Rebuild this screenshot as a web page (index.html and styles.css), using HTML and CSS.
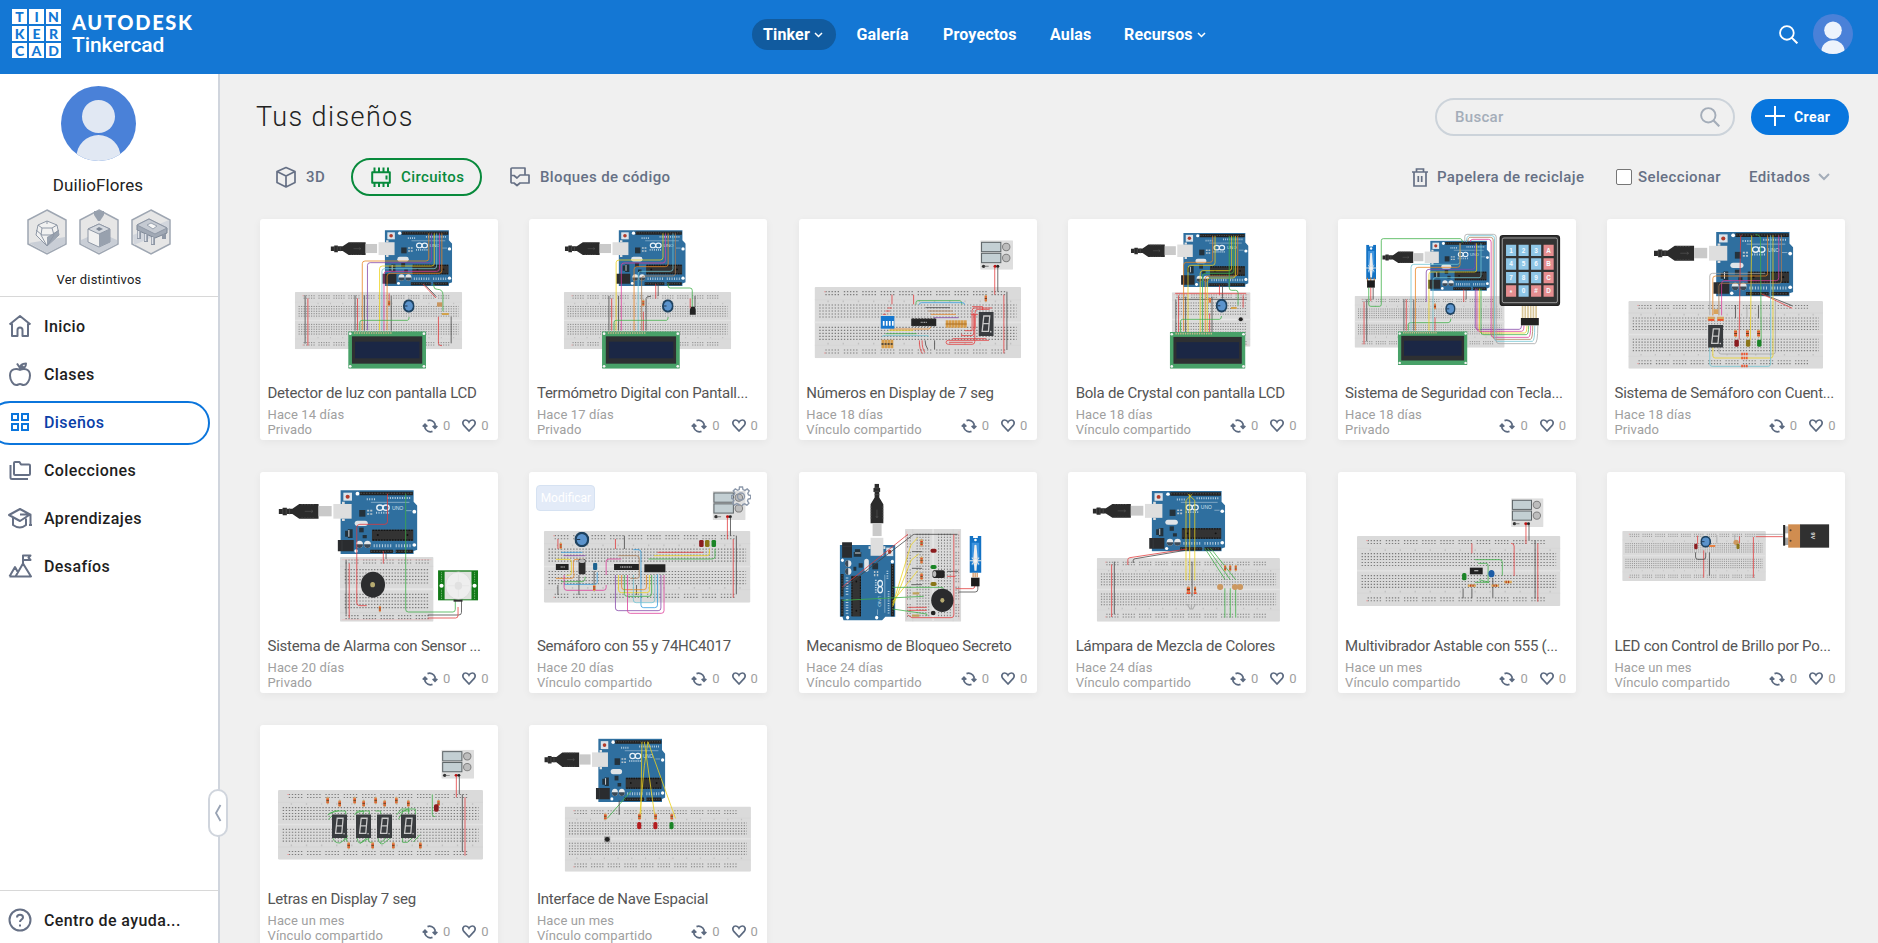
FILE: index.html
```html
<!DOCTYPE html>
<html lang="es">
<head>
<meta charset="utf-8">
<title>Tinkercad</title>
<link rel="stylesheet" href="styles.css">
</head>
<body>
<svg class="defs" width="0" height="0" aria-hidden="true">
<defs>
<symbol id="uno" viewBox="84 74 403 194" preserveAspectRatio="none">
<path d="M84 132h12v-4h12v3h16l20-14h56v44h-56l-20-14h-16v4h-12v-4h-12z" fill="#2b2b2b"/><path d="M96 130v18M106 130v18M116 130v18" stroke="#555" stroke-width="2"/><path d="M150 119h40M150 159h40" stroke="#555" stroke-width="2" stroke-dasharray="5 3"/><path d="M160 139h24l-5-4m5 4l-5 4" stroke="#555" stroke-width="2" fill="none"/>
<rect x="200" y="123" width="38" height="31" fill="#c9c9c9"/>
<path d="M264 76h212v34l11 12v132l-11 4v9H264z" fill="#2f6f9f"/><rect x="243" y="117" width="53" height="44" fill="#dedede"/><path d="M268 110h8v7h-8zM268 161h8v7h-8z" fill="#dedede"/>
<rect x="272" y="83" width="25" height="24" fill="#dbe3ea"/><circle cx="284.500" cy="95" r="6" fill="#b23c2c"/>
<path d="M320 80h88v11h-88zM408 80h66v11h-66z" fill="#222"/><path d="M322 85h150" stroke="#555" stroke-width="3" stroke-dasharray="4 4"/>
<g fill="#fff"><circle cx="313" cy="86" r="5.500"/><circle cx="478" cy="140" r="5.500"/><circle cx="478" cy="240" r="5.500"/><circle cx="309" cy="258" r="5"/></g>
<g fill="none" stroke="#e8f1f8" stroke-width="4"><ellipse cx="378" cy="128" rx="9" ry="8"/><ellipse cx="396" cy="128" rx="9" ry="8"/></g>
<path d="M340 103h28M400 99h70M367 143h38" stroke="#bcd2e2" stroke-width="6" stroke-dasharray="3 4"/><text class="model" x="413" y="134">UNO</text><path d="M352 112h112M454 137h16" stroke="#a9c6da" stroke-width="2"/>
<rect x="318" y="135" width="18" height="20" fill="#24323c"/><path d="M341 137h18M341 147h18" stroke="#b7c4cc" stroke-width="5" stroke-dasharray="6 3"/>
<rect x="305" y="167" width="38" height="16" rx="8" fill="#dfe4e8"/><rect x="318" y="188" width="13" height="14" fill="#24323c"/><path d="M277 197h8v-4h14v26h-14v-4h-8z" fill="#22313b"/><path d="M288 195v20" stroke="#d0d6da" stroke-width="3"/><path d="M328 210h12v10h-12" fill="#22313b"/>
<rect x="355" y="194" width="120" height="33" fill="#333"/><path d="M357 196h116M357 225h116" stroke="#151515" stroke-width="4" stroke-dasharray="5 3"/><circle cx="372" cy="210" r="3" fill="#111"/><circle cx="458" cy="210" r="3" fill="#111"/>
<path d="M256 225h46v34h-46z" fill="#2a2c2f"/><path d="M268 226v32" stroke="#3d4043" stroke-width="2"/>
<g><ellipse cx="319" cy="238" rx="10" ry="11" fill="#e5e8ea"/><ellipse cx="342" cy="238" rx="10" ry="11" fill="#e5e8ea"/><path d="M309 238h20a10 11 0 0 1-20 0zM332 238h20a10 11 0 0 1-20 0z" fill="#3a4a58"/></g>
<path d="M360 242h56M424 242h48" stroke="#b9d0e0" stroke-width="9" stroke-dasharray="3 5"/><path d="M350 254h66v10h-66zM424 254h50v10h-50z" fill="#222"/><path d="M352 259h120" stroke="#555" stroke-width="3" stroke-dasharray="4 4"/>
</symbol>
<symbol id="board" viewBox="0 0 611 214" preserveAspectRatio="none">
<rect width="611" height="214" rx="4" fill="#dadada"/><path d="M0 38h611M0 175h611" stroke="#cfcfcf" stroke-width="1"/><path d="M0 106h611" stroke="#e3e3e3" stroke-width="5"/>
<g stroke="#7c7c7c" stroke-width="3.400"><g stroke-dasharray="4 5.100 4 5.100 4 5.100 4 5.100 4 14.200"><path d="M32 14h542M32 23h542M32 189h542M32 198h542"/></g><g stroke-dasharray="4 5.100"><path d="M14 54h584M14 63h584M14 72h584M14 81h584M14 90h584M14 121h584M14 130h584M14 139h584M14 148h584M14 157h584"/></g></g>
<g stroke="#c0c0c0" stroke-width="5" stroke-dasharray="4 41"><path d="M38 43h548M38 170h548"/></g><path d="M28 14h5M28 198h5" stroke="#e8a0a0" stroke-width="3"/>
</symbol>
<symbol id="halfboard" viewBox="0 0 272 194" preserveAspectRatio="none">
<rect width="272" height="194" rx="3" fill="#dadada"/><path d="M0 97h272" stroke="#e6e6e6" stroke-width="6"/><path d="M0 28h272M0 167h272" stroke="#c9c9c9"/>
<g stroke="#7c7c7c" stroke-width="3.400"><g stroke-dasharray="4 4.500 4 4.500 4 4.500 4 4.500 4 13"><path d="M16 9h242M16 18h242M16 176h242M16 185h242"/></g><g stroke-dasharray="4 4.500"><path d="M14 38h246M14 48h246M14 58h246M14 68h246M14 78h246M14 112h246M14 122h246M14 132h246M14 142h246M14 152h246"/></g></g>
<path d="M6 8h260M6 188h260" stroke="#e9b3b3" stroke-width="1.500"/>
</symbol>
<symbol id="lcd" viewBox="0 0 226 112" preserveAspectRatio="none"><rect width="226" height="112" rx="2" fill="#48a168"/><rect x="11" y="15" width="204" height="82" fill="#2e3032"/><rect x="20" y="31" width="187" height="50" fill="#1b2745"/><path d="M17 5h112" stroke="#c9b98d" stroke-width="5" stroke-dasharray="4 3"/><g fill="#f4f4f4"><circle cx="6" cy="7" r="4"/><circle cx="220" cy="7" r="4"/><circle cx="6" cy="105" r="4"/><circle cx="220" cy="105" r="4"/></g></symbol>
<symbol id="pot" viewBox="0 0 36 40" preserveAspectRatio="none"><ellipse cx="18" cy="20" rx="18" ry="20" fill="#1e4260"/><ellipse cx="18" cy="20" rx="12.500" ry="14" fill="#5b93cc"/><path d="M5 20h9" stroke="#1e3550" stroke-width="3"/></symbol>
<symbol id="psu" viewBox="0 0 97 88" preserveAspectRatio="none"><rect width="97" height="88" rx="2" fill="#dedede"/><rect x="4" y="6" width="57" height="28" fill="#c3cfd3" stroke="#5d6467" stroke-width="3"/><rect x="4" y="39" width="57" height="28" fill="#c3cfd3" stroke="#5d6467" stroke-width="3"/><circle cx="77" cy="20" r="11" fill="#bdbdbd" stroke="#808080" stroke-width="3"/><circle cx="77" cy="53" r="11" fill="#bdbdbd" stroke="#808080" stroke-width="3"/><circle cx="10" cy="78" r="5" fill="#333"/><path d="M13 78h12" stroke="#777" stroke-width="3"/><circle cx="44" cy="78" r="4.500" fill="#b11"/><circle cx="52" cy="78" r="4.500" fill="#222"/></symbol>
<symbol id="seg" viewBox="0 0 46 72" preserveAspectRatio="none"><rect width="46" height="72" fill="#393c3f"/><path d="M16 12h18l-4 46H11zM13 35h19" fill="none" stroke="#c9c9c9" stroke-width="4"/><circle cx="37" cy="59" r="2.500" fill="#c9c9c9"/></symbol>
<symbol id="res" viewBox="0 0 10 26" preserveAspectRatio="none"><path d="M5 0v26" stroke="#999" stroke-width="2"/><rect x="1" y="3" width="8" height="20" rx="2" fill="#d8a35c"/><path d="M1 9h8M1 18h8" stroke="#e03a22" stroke-width="3"/><path d="M1 13.500h8" stroke="#6b3c1a" stroke-width="3"/></symbol>
<symbol id="servo" viewBox="0 0 40 112" preserveAspectRatio="none"><path d="M3 0h10v6h14V0h10v110H3z" fill="#1372c4"/><path d="M9 20h22v68H9z" fill="#3d93de"/><path d="M17 28q3-4 6 0l3 36-3 40h-6l-3-40z" fill="#eee"/><path d="M0 74h40M9 65l22 20M31 65L9 85" stroke="#dfe4e8" stroke-width="3"/><circle cx="20" cy="75" r="7" fill="#f4f4f4" stroke="#bbb"/><circle cx="20" cy="12" r="4" fill="#fff"/></symbol>
<symbol id="recycle" viewBox="0 0 16 16"><path d="M5.500 2.600A5.800 5.800 0 0 1 13 6v4M10.500 13.400A5.800 5.800 0 0 1 3 10V6.500M.8 8.700L3 6.300l2.300 2.400M10.700 7.800L13 10.200l2.300-2.400" fill="none" stroke="currentColor" stroke-width="1.800"/></symbol>
<symbol id="heart" viewBox="0 0 14 13"><path d="M7 12L2 6.700C-.3 4 1.200 1 3.700 1 5.500 1 6.500 2.200 7 3.200 7.500 2.200 8.500 1 10.300 1c2.500 0 4 3 1.700 5.700z" fill="none" stroke="currentColor" stroke-width="1.700"/></symbol>
<symbol id="person" viewBox="0 0 75 75"><clipPath id="pc"><circle cx="37.500" cy="37.500" r="37.500"/></clipPath><g clip-path="url(#pc)"><rect width="75" height="75" fill="#4a81d8"/><g fill="currentColor"><circle cx="37.500" cy="30.500" r="16.500"/><circle cx="37.500" cy="71" r="22"/></g></g></symbol>
<symbol id="lens" viewBox="0 0 20 20"><circle cx="8.300" cy="8.300" r="7.200" fill="none" stroke="currentColor" stroke-width="1.900"/><path d="M13.300 13.300l6 6" stroke="currentColor" stroke-width="2.200"/></symbol>
</defs>
</svg>

<header class="topbar">
<a class="brand">
<span class="tiles"><b>T</b><b>I</b><b>N</b><b>K</b><b>E</b><b>R</b><b>C</b><b>A</b><b>D</b></span>
<span class="brand-text"><span class="brand-top">AUTODESK</span><span class="brand-sub">Tinkercad</span></span>
</a>
<nav class="nav">
<a class="nav-link active">Tinker<svg class="chev" viewBox="0 0 9 6"><path d="M1 1l3.500 3.500L8 1"/></svg></a><a class="nav-link n2">Galería</a><a class="nav-link n3">Proyectos</a><a class="nav-link n4">Aulas</a><a class="nav-link n5">Recursos<svg class="chev" viewBox="0 0 9 6"><path d="M1 1l3.500 3.500L8 1"/></svg></a>
</nav>
<div class="account"><svg class="lens-top"><use href="#lens"/></svg><svg class="face-top"><use href="#person"/></svg></div>
</header>

<div class="shell">
<aside class="side">
<div class="profile">
<svg class="face"><use href="#person"/></svg>
<div class="user">DuilioFlores</div>
<div class="badges">
<svg viewBox="0 0 40 46"><path class="hex" d="M20 1l19 10v24L20 45 1 35V11z"/><path d="M2 34l36-6v7L20 44z" fill="#c9ced6"/><path d="M11 16l9-4 10 4 2 10-12 11L9 26z" fill="#f1f1f1" stroke="#8f98a6"/><path d="M20 28l12-7v5L20 37z" fill="#9aa3b0"/><path d="M9 21l6 5h10l7-5M15 19l-4-3M25 19l5-3M15 19h10l2 7-7 11-6-11zM20 12v3" fill="none" stroke="#8f98a6"/></svg>
<svg viewBox="0 0 40 46"><path class="hex" d="M20 1l19 10v24L20 45 1 35V11z"/><path d="M2 31l18-8 18 8v4L20 44 2 35z" fill="#c9ced6"/><path d="M15 2h10v4l-4 6h-2l-4-6z" fill="#98a1ae"/><path d="M9 20l11-5 11 5v13l-11 5-11-5z" fill="#f1f1f1" stroke="#8f98a6"/><path d="M20 25l11-5v13l-11 5z" fill="#98a1ae"/><path d="M9 20l11 5 11-5-11-5z" fill="#d5d9df" stroke="#8f98a6"/><path d="M17 20l3-2 4 2-4 2z" fill="#7d8796"/></svg>
<svg viewBox="0 0 40 46"><path class="hex" d="M20 1l19 10v24L20 45 1 35V11z"/><path d="M2 26L38 11v10L3 36z" fill="#d2d6dd"/><path d="M6 16l12-6 18 9v5l-12 5-18-8z" fill="#a1a9b5" stroke="#7d8796"/><path d="M6 16l12-6 18 9-12 6z" fill="#c5cad2" stroke="#8f98a6"/><path d="M16 16l4-2 6 3-4 3z" fill="#f6f6f6" stroke="#9aa3b0"/><path d="M8 22v8M15 25v8M22 28v8M33 25v5" stroke="#8f98a6" stroke-width="4"/><path d="M7.500 22v7M14.500 25v7M21.500 28v7" stroke="#e1e4e9" stroke-width="1.500"/></svg>
</div>
<div class="see">Ver distintivos</div>
</div>
<nav class="menu">
<a><svg viewBox="0 0 24 24"><path d="M1.500 10.500L12 2l10.500 8.500M4 9.500V22h5.500v-6a2.500 2.500 0 0 1 5 0v6H20V9.500"/></svg>Inicio</a>
<a><svg viewBox="0 0 24 24"><path d="M12 8C8.500 6 2 6.500 2 13.500 2 18 5 23 8.500 23c1.500 0 2-1 3.500-1s2 1 3.500 1C19 23 22 18 22 13.500 22 6.500 15.500 6 12 8zM12 8V6L9 1.500M12 6.500c0-4 2.500-5 6-5 0 3.500-2 5.500-6 5M12 6.500l3.500-2.500"/></svg>Clases</a>
<a class="on"><svg viewBox="0 0 24 24"><path d="M4 4h6v6H4zM14 4h6v6h-6zM4 14h6v6H4zM14 14h6v6h-6z"/></svg>Diseños</a>
<a><svg viewBox="0 0 24 24"><path d="M6 16V5q0-1 1-1h4.500l1.500 2.500h8q1 0 1 1V16q0 1-1 1H7q-1 0-1-1zM2.500 7v12.500q0 1.500 1.500 1.500h16"/></svg>Colecciones</a>
<a><svg viewBox="0 0 24 24"><path d="M1 9l11-6 10 5.500L12 15zM5 12v7q7 5 13 0v-6.500M12 8.500h10.500V18M21 19h3"/></svg>Aprendizajes</a>
<a><svg viewBox="0 0 24 24"><path d="M1.500 22.500L7 13l3 5.500M7.500 22.500L15 9.500l8 13H1.500M15 9.500V1.500h7.500l-2 2.200 2 2.300H15"/></svg>Desafíos</a>
</nav>
<div class="help"><svg viewBox="0 0 24 24"><circle cx="12" cy="12" r="10.500"/><path d="M9 9.500C9 5.800 15 5.800 15 9.500c0 2-3 2.200-3 4.500M12 16.500v2"/></svg>Centro de ayuda...</div>
<button class="handle"><svg viewBox="0 0 8 18"><path d="M6.500 1L2 9l4.500 8"/></svg></button>
</aside>

<main class="main">
<div class="row head"><h1>Tus diseños</h1>
<div class="search"><span>Buscar</span><svg><use href="#lens"/></svg></div>
<button class="create"><svg viewBox="0 0 20 20"><path d="M10 0v20M0 10h20"/></svg>Crear</button></div>
<div class="row tools">
<a class="tab t3d"><svg viewBox="0 0 20 22"><path d="M10 1.500l9 4v11l-9 4.500-9-4.500v-11zM1 5.500l9 4.500 9-4.500M10 10v11"/></svg>3D</a>
<a class="tab sel"><svg viewBox="0 0 20 22"><path d="M1.200 6.200h17.600v10.500H1.200zM3.500 1.500v4M8 1.500v4M12.500 1.500v4M17 1.500v4M3.500 17v4M8 17v4M12.500 17v4M17 17v4M15.500 9.500v4"/></svg>Circuitos</a>
<a class="tab blocks"><svg viewBox="0 0 20 22"><path d="M1 10V3q0-1 1-1h13v7h4v8h-9l-3 2.500L4 17H2q-1 0-1-1V9.500h3L7 12l3-3h5"/></svg>Bloques de código</a>
<a class="tool bin"><svg viewBox="0 0 16 19"><path d="M0 4h16M2 4v14h12V4M4.500 4V1h7v3M6.300 8v6M9.700 8v6"/></svg>Papelera de reciclaje</a>
<label class="tool pick"><i></i>Seleccionar</label>
<a class="tool sort">Editados<svg viewBox="0 0 12 8"><path d="M1 1l5 5 5-5"/></svg></a>
</div>

<section class="grid">
<article class="card"><svg class="thumb" viewBox="30 27 691 480" preserveAspectRatio="none">
<use href="#board" x="131" y="246" width="486" height="172"/><use href="#uno" x="235" y="59" width="353" height="170"/>
<g class="w"><path class="k" d="M161 256v145M306 256v106M411 256v106M585 320v80M333 256v106M507 222l35 38"/><path class="r" d="M169 265v142M313 265v97M548 320v80q0 7 10 7M503 222l38 42M405 250v38"/><path class="o" d="M520 70v75q0 8-8 8H335q-8 0-8 8v200M558 70v112q0 8-8 8H408q-9 0-9 8v163"/><path class="p" d="M528 70v80q0 8-8 8H350q-8 0-8 8v195"/><path class="y" d="M536 70v90q0 8-8 8H386q-9 0-9 8v185"/><path class="c" d="M543 70v98q0 8-8 8H392q-8 0-8 8v177"/><path class="m" d="M551 70v106q0 8-8 8H398q-8 0-8 8v170"/><path class="g" d="M320 362v-25q0-6 6-6h132q5 0 5-10M535 222v8q0 8 10 8 16 0 16 16v50"/></g>
<use href="#pot" x="445" y="268" width="34" height="40"/><use href="#res" x="401" y="268" width="8" height="22"/><rect x="544" y="277" width="15" height="13" fill="#c9955f"/><path d="M558 312h20" stroke="#d2a24c" stroke-width="6"/>
<use href="#lcd" x="286" y="364" width="226" height="112"/></svg>
<h2>Detector de luz con pantalla LCD</h2><div class="meta"><p>Hace 14 días<br>Privado</p><span><svg class="rc"><use href="#recycle"/></svg>0</span><span><svg class="ht"><use href="#heart"/></svg>0</span></div></article>

<article class="card"><svg class="thumb" viewBox="811 27 691 480" preserveAspectRatio="none">
<use href="#board" x="912" y="246" width="486" height="172"/><use href="#uno" x="915" y="59" width="351" height="170"/>
<g class="w"><path class="k" d="M1043 258v104M1071 258v104M1151 362V265q0-6 14-6M1186 222v36M1293 258v35"/><path class="r" d="M1051 265v97M1143 305v57M1179 222v44M1279 265v30"/><path class="y" d="M1200 70v72q0 8-8 8h-119q-9 0-9 8v204"/><path class="m" d="M1207 70v81q0 8-8 8h-112q-8 0-8 8v195"/><path class="o" d="M1215 70v92q0 8-8 8h-83q-8 0-8 8v184"/><path class="c" d="M1229 70v106q0 8-8 8h-86q-7 0-7 8v170"/><path class="b" d="M1236 70v120q0 8-8 8h-82q-8 0-8 8v156"/><path class="g" d="M1058 362v-25q0-6 6-6h146q5 0 5-10M1215 220v8q0 6 6 6h57q7 0 7 7v50"/></g>
<use href="#pot" x="1197" y="268" width="34" height="40"/><use href="#res" x="1139" y="266" width="8" height="26"/><path d="M1278 314v-15l4-9h10l3 9v15z" fill="#222"/>
<use href="#lcd" x="1023" y="364" width="226" height="112"/></svg>
<h2>Termómetro Digital con Pantall...</h2><div class="meta"><p>Hace 17 días<br>Privado</p><span><svg class="rc"><use href="#recycle"/></svg>0</span><span><svg class="ht"><use href="#heart"/></svg>0</span></div></article>

<article class="card"><svg class="thumb" viewBox="26 27 704 480" preserveAspectRatio="none">
<use href="#board" x="72" y="231" width="611" height="214"/><use href="#psu" x="562" y="91" width="97" height="88"/>
<g class="w"><path class="r" d="M605 170v84M632 254v176M301 254v29M365 254v29M288 294h13M282 303h13M274 313h10M382 391q0 30 10 40M390 391q0 25 8 36"/><path class="k" d="M614 170v75M641 245v175M399 391q0 15 8 27M427 391v28"/><path class="g" d="M372 284v-6q0-6 6-6h124q6 0 6 12M282 371h92"/><path class="bl" d="M382 284q0-6 6-6h121q7 0 7 6"/><path class="k" d="M400 293h73"/><path class="b" d="M408 303h73"/><path class="o" d="M416 313h74M294 357h115q6 0 6-6"/><path class="p" d="M424 323h74"/><path class="y" d="M291 361h73"/><path class="c" d="M274 381v-4h134v4"/><path class="r" d="M597 294h-51q-8 0-8 8v60h-22M590 298h-35q-8 0-8 8v50M569 300v-10h-31M555 314h-20M507 371v6h28q8 0 8-8v-60M588 391h-120q-7 0-7 6 0 6 7 6h70q8 0 8-8v-80M480 386h100M470 397h70"/></g>
<rect x="268" y="318" width="40" height="38" fill="#1577cf"/><path d="M274 340h32" stroke="#fff" stroke-width="14" stroke-dasharray="5 4"/><rect x="358" y="326" width="74" height="22" fill="#252525"/><path d="M361 326h70M361 348h70" stroke="#444" stroke-width="3" stroke-dasharray="5 4"/><path d="M386 337h20" stroke="#aaa" stroke-width="4" stroke-dasharray="3 2"/>
<path d="M460 342h62" stroke="#d79d4a" stroke-width="22" stroke-dasharray="8 1"/><path d="M460 342h62" stroke="#a86a20" stroke-width="3"/><path d="M270 402h36" stroke="#d79d4a" stroke-width="26" stroke-dasharray="8 1"/><path d="M270 402h36" stroke="#333" stroke-width="4" stroke-dasharray="6 3"/><use href="#res" x="574" y="252" width="9" height="26"/>
<use href="#seg" x="557" y="306" width="45" height="72"/></svg>
<h2>Números en Display de 7 seg</h2><div class="meta"><p>Hace 18 días<br>Vínculo compartido</p><span><svg class="rc"><use href="#recycle"/></svg>0</span><span><svg class="ht"><use href="#heart"/></svg>0</span></div></article>

<article class="card"><svg class="thumb" viewBox="823 27 704 480" preserveAspectRatio="none">
<use href="#halfboard" x="1130" y="247" width="233" height="163"/><use href="#uno" x="1009" y="67" width="348" height="165"/>
<g class="w"><path class="k" d="M1142 268v98M1171 260v106M1249 260v106M1280 226v40M1148 268h204"/><path class="r" d="M1140 250h210M1150 256v110M1271 226v30M1341 256v37M1242 310v56"/><path class="o" d="M1251 78v71q0 8-8 8h-70q-8 0-8 8v198M1325 78v112q0 8-8 8h-80q-8 0-8 8v160"/><path class="y" d="M1258 78v80q0 8-8 8h-64q-8 0-8 8v192M1307 78v96q0 8-8 8h-77q-8 0-8 8v176M1318 78v118q0 8-8 8h-68q-7 0-7 8v154"/><path class="g" d="M1156 366v-32q0-6 6-6h109q6 0 6-10M1300 78v156q0 7 7 7h12q7 0 7 7v38M1313 78v104q0 8-8 8h-76q-8 0-8 8v168"/></g>
<use href="#pot" x="1260" y="266" width="35" height="42"/><path d="M1305 294h17" stroke="#d2a24c" stroke-width="6"/><rect x="1239" y="264" width="7" height="14" fill="#e67a40"/><path d="M1325 322h18v13h-18z" fill="#ccc"/><circle cx="1334" cy="328" r="6" fill="#222"/>
<use href="#lcd" x="1124" y="366" width="224" height="110"/></svg>
<h2>Bola de Crystal con pantalla LCD</h2><div class="meta"><p>Hace 18 días<br>Vínculo compartido</p><span><svg class="rc"><use href="#recycle"/></svg>0</span><span><svg class="ht"><use href="#heart"/></svg>0</span></div></article>

<article class="card"><svg class="thumb" viewBox="22 27 704 480" preserveAspectRatio="none">
<use href="#board" x="71" y="258" width="444" height="155"/><use href="#uno" x="153" y="91" width="318" height="152"/><use href="#servo" x="103" y="104" width="34" height="106"/>
<path d="M109 203v12M119 203v12M129 203v12" stroke="#c77a38" stroke-width="3"/><rect x="108" y="211" width="23" height="22" fill="#1c1c1c"/>
<g class="w"><path class="g" d="M113 233v50q0 6 6 6h26q5 0 5-6V92q0-6 6-6h228q6 0 6 12M230 362v-18q0-6 6-6h112q8 0 8-12"/><path class="r" d="M119 233v40M99 275v128M224 268v94M309 322v40M394 238v38"/><path class="k" d="M126 233v36M217 268v94M246 268v94M107 268v126M401 238v30"/><path class="c" d="M383 100v54q0 9-8 9H246q-8 0-8 9v190M445 100v98q0 5-6 5H310q-7 0-7 8v150"/><path class="o" d="M383 100v64q0 8-8 8H258q-7 0-7 8v182"/><path class="p" d="M428 100v66q0 12-9 12H291q-8 0-8 8v90M428 236v114q0 8 8 8h122q7 0 7-12"/><path class="y" d="M432 100v80q0 6-6 6H297q-6 0-6 8v168M440 236v125q0 8 8 8h126q7 0 7-22"/><path class="g" d="M445 236v130q0 8 8 8h126q7 0 7-27"/><path class="m" d="M413 96q0-8 8-8h46q8 0 8 8v278q0 8 8 8h102q7 0 7-35M433 236v120q0 8 8 8h124q7 0 7-17"/><path class="b" d="M406 96q0-14 7-14h60q8 0 8 8v290q0 8 8 8h102q7 0 7-41"/><path class="c" d="M402 96q0-19 9-19h66q8 0 8 8v300q0 9 8 9h104q7 0 7-47"/><path class="gr" d="M397 96V80q0-7 7-7h78q8 0 8 8v311q0 9 8 9h106q9 0 9-54"/></g>
<path d="M568 286v40M576 286v40M584 286v40M592 286v40M600 286v40M608 286v40" stroke="#d9c79a" stroke-width="5"/><rect x="563" y="324" width="53" height="22" fill="#222"/>
<rect x="502" y="77" width="175" height="209" rx="8" fill="#333" stroke="#222" stroke-width="4"/><rect x="508" y="84" width="163" height="194" rx="5" fill="none" stroke="#ccc" stroke-width="2"/>
<g fill="#8fc6e6"><path d="M519 104h30v34h-30zM556 104h30v34h-30zM593 104h30v34h-30zM519 145h30v34h-30zM556 145h30v34h-30zM593 145h30v34h-30zM519 186h30v34h-30zM556 186h30v34h-30zM593 186h30v34h-30zM556 226h30v34h-30z"/></g><path fill="#e58e90" d="M630 104h30v34h-30zM630 145h30v34h-30zM630 186h30v34h-30zM630 226h30v34h-30zM519 226h30v34h-30zM593 226h30v34h-30z"/>
<g class="keys"><text x="534" y="128">1</text><text x="571" y="128">2</text><text x="608" y="128">3</text><text x="645" y="128">A</text><text x="534" y="169">4</text><text x="571" y="169">5</text><text x="608" y="169">6</text><text x="645" y="169">B</text><text x="534" y="210">7</text><text x="571" y="210">8</text><text x="608" y="210">9</text><text x="645" y="210">C</text><text x="534" y="255">*</text><text x="571" y="250">0</text><text x="608" y="250">#</text><text x="645" y="250">D</text></g>
<use href="#pot" x="339" y="278" width="31" height="37"/><use href="#res" x="305" y="278" width="8" height="22"/><use href="#lcd" x="199" y="364" width="206" height="101"/></svg>
<h2>Sistema de Seguridad con Tecla...</h2><div class="meta"><p>Hace 18 días<br>Privado</p><span><svg class="rc"><use href="#recycle"/></svg>0</span><span><svg class="ht"><use href="#heart"/></svg>0</span></div></article>

<article class="card"><svg class="thumb" viewBox="819 27 704 480" preserveAspectRatio="none">
<use href="#board" x="882" y="273" width="576" height="203"/><use href="#uno" x="958" y="64" width="412" height="196"/>
<g class="w"><path class="k" d="M1199 285v40M1267 285v40M1275 250l94 38"/><path class="gr" d="M1233 285v40M1150 412v14q0 6 6 6h155q6 0 6-7V268M1123 316V198q0-8 8-8h156"/><path class="r" d="M1273 250l94 45M1218 74q-4 2-4 10l-4 305"/><path class="o" d="M1132 316V206q0-8 8-8h148q6 0 6-8V76"/><path class="m" d="M1158 316v-95q0-9 8-9h154q7 0 7-9V76"/><path class="b" d="M1150 316v-88q0-8 8-8h170q7 0 7-9V76"/><path class="y" d="M1247 76l-4 315M1132 412v25q0 7 7 7h164q7 0 7-8V76"/><path class="g" d="M1258 74q16 0 15 14l2 303"/><path class="c" d="M1123 412v50q0 7 7 7h166q7 0 7-8V76"/></g>
<path d="M1117 320h20v12h-20zM1145 320h20v12h-20zM1134 298h14v14h-14z" fill="#d8a35c"/><path d="M1119 330h17M1146 330h17" stroke="#f33b20" stroke-width="5"/><use href="#res" x="1194" y="356" width="11" height="28"/><use href="#res" x="1229" y="356" width="11" height="28"/><use href="#res" x="1262" y="356" width="11" height="28"/>
<rect x="1196" y="389" width="13" height="21" rx="4" fill="#8b1c1f"/><rect x="1230" y="389" width="13" height="21" rx="4" fill="#8a7517"/><rect x="1263" y="389" width="13" height="21" rx="4" fill="#1b8427"/><path d="M1216 432h20M1216 444h20M1216 468h20" stroke="#ee5732" stroke-width="7" stroke-dasharray="5 2"/>
<use href="#seg" x="1118" y="345" width="45" height="68"/></svg>
<h2>Sistema de Semáforo con Cuent...</h2><div class="meta"><p>Hace 18 días<br>Privado</p><span><svg class="rc"><use href="#recycle"/></svg>0</span><span><svg class="ht"><use href="#heart"/></svg>0</span></div></article>

<article class="card"><svg class="thumb" viewBox="30 21 691 480" preserveAspectRatio="none">
<use href="#halfboard" x="262" y="276" width="272" height="194"/><use href="#uno" x="84" y="74" width="403" height="194"/>
<g class="w"><path class="k" d="M280 286v163M396 262v20M517 450h90q8 0 8-8v-35"/><path class="r" d="M289 295v164M388 258v38M400 86v84q0 8-8 8h-72q-9 0-9 9v227q0 8 9 8h20M517 459h81q7 0 7-8v-25"/><path class="g" d="M453 86v347q0 8 8 8h129q7 0 7-8v-26"/></g>
<ellipse cx="358" cy="359" rx="35" ry="39" fill="#2c2d2f"/><ellipse cx="357" cy="359" rx="7" ry="8" fill="#b7ab71"/><use href="#res" x="374" y="420" width="8" height="23"/>
<rect x="547" y="316" width="116" height="90" fill="#137a18"/><rect x="566" y="320" width="78" height="83" fill="#dfe3de"/><ellipse cx="606" cy="362" rx="37" ry="41" fill="#eee" stroke="#d5d5d5" stroke-width="2"/><ellipse cx="606" cy="362" rx="11" ry="12" fill="#e1e1e1"/><path d="M606 350v-22M606 374v22M595 362h-20M617 362h20" stroke="#e4e4e4" stroke-width="2"/><circle cx="557" cy="362" r="6" fill="#fff"/><circle cx="653" cy="362" r="6" fill="#fff"/><path d="M557 322v28M557 374v28M653 322v28M653 374v28" stroke="#6cb36e" stroke-width="3" stroke-dasharray="3 2"/><rect x="592" y="404" width="26" height="6" fill="#333"/></svg>
<h2>Sistema de Alarma con Sensor ...</h2><div class="meta"><p>Hace 20 días<br>Privado</p><span><svg class="rc"><use href="#recycle"/></svg>0</span><span><svg class="ht"><use href="#heart"/></svg>0</span></div></article>

<article class="card"><svg class="thumb" viewBox="811 21 691 480" preserveAspectRatio="none">
<use href="#board" x="854" y="198" width="600" height="215"/><use href="#psu" x="1344" y="78" width="96" height="87"/>
<g class="w"><path class="r" d="M1387 157v66M1404 222v176M895 222v30M1062 222v30M1184 262h133"/><path class="k" d="M1396 157v55M1413 212v176M1088 212v40M956 330v60M895 360v30M1000 318v40M1123 360v30"/><path class="bl" d="M904 262h62M913 358h90q6 0 6-6v-30M1114 254h14q8 0 8 8v158q0 8 8 8h32q8 0 8-8v-92"/><path class="p" d="M911 272h64M1062 330v99q0 8 8 8h116q8 0 8-8v-99"/><path class="y" d="M889 283h38q7 0 7 7v33q0 8-8 8h-6M1174 272h153q8 0 8-8v-12M1071 330v45q0 8 8 8h74q8 0 8-8v-45"/><path class="o" d="M940 325v-36q0-6 8-6h24M889 340h46q7 0 7-15M1080 330v36q0 8 8 8h56q8 0 8-8v-36"/><path class="g" d="M904 350h62q8 0 8-15M1158 282h185q8 0 8-8v-22M1088 330v56q0 8 8 8h63q8 0 8-8v-56"/><path class="m" d="M913 330v38q0 8 8 8h106q8 0 8-8v-8M1035 330v-40q0-8 8-8h36M1097 330v107q0 8 8 8h90q8 0 8-8V330"/><path class="c" d="M1114 330v75q0 8 8 8h46q8 0 8-8v-75"/><path class="b" d="M1070 272h53q8 0 8 8v54q0 6-8 6h-18"/></g>
<use href="#pot" x="943" y="200" width="43" height="47"/><path d="M889 297h37v18h-37zM1058 297h72v18h-72zM1146 298h61v24h-61z" fill="#232323"/><path d="M903 306h12M1076 306h34" stroke="#aaa" stroke-width="4" stroke-dasharray="3 2"/><rect x="955" y="282" width="20" height="46" rx="4" fill="#2e2e2e"/><ellipse cx="965" cy="288" rx="9" ry="6" fill="#bbb"/><rect x="997" y="294" width="12" height="21" rx="3" fill="#1e6390"/><use href="#res" x="899" y="230" width="8" height="25"/><use href="#res" x="996" y="356" width="9" height="25"/>
<rect x="1305" y="225" width="13" height="21" rx="4" fill="#8b1c1f"/><rect x="1322" y="225" width="13" height="21" rx="4" fill="#8a7517"/><rect x="1341" y="225" width="13" height="21" rx="4" fill="#1b8427"/></svg>
<span class="edit">Modificar</span><svg class="gear" viewBox="0 0 20 20"><path d="M8.500 1h3l.5 2.600 2 .8 2.200-1.500 2 2-1.400 2.300.7 1.800 2.200.5v3l-2.500.5-.8 2 1.500 2.200-2 2-2.300-1.400-1.800.7-.6 2.500h-3l-.5-2.700-2-.8-2.200 1.500-2-2L3 14.700 2.300 13 .5 12.500v-3L3 9l.8-2L2.300 4.900l2-2 2.300 1.400 1.600-.7z"/><circle cx="10" cy="10.500" r="3.500"/></svg>
<h2>Semáforo con 55 y 74HC4017</h2><div class="meta"><p>Hace 20 días<br>Vínculo compartido</p><span><svg class="rc"><use href="#recycle"/></svg>0</span><span><svg class="ht"><use href="#heart"/></svg>0</span></div></article>

<article class="card"><svg class="thumb" viewBox="26 21 704 480" preserveAspectRatio="none">
<g transform="matrix(0 1.022 -.859 0 506 192)"><use href="#halfboard" width="272" height="194"/></g><g transform="matrix(0 1.018 -.859 0 376 -29)"><use href="#uno" x="84" y="74" width="403" height="194"/></g>
<use href="#servo" x="528" y="213" width="40" height="112"/>
<g class="w"><path class="k" d="M495 208H368q-5 0-8 4L154 372M360 260h30M360 310h30M358 359h32M464 319h33M497 381h50q8 0 8-8v-10"/><path class="r" d="M348 208L154 366M484 208v242q0 8-8 8H360l-12-8M349 427h55M349 436h55M464 334h25M489 371h50q7 0 7-8"/><path class="y" d="M303 420l54-180 20-22M303 425l55-140 22-18M303 410l74-93"/><path class="g" d="M303 367h148q2 0 2 12M154 406l241-12M303 432l101 15v6"/></g>
<ellipse cx="450" cy="406" rx="33" ry="35" fill="#2a2b2d"/><ellipse cx="450" cy="406" rx="6" ry="7" fill="#b7ab71"/><rect x="421" y="316" width="36" height="23" rx="5" fill="#242424"/><ellipse cx="427" cy="327" rx="5" ry="9" fill="#bbb"/><rect x="415" y="251" width="18" height="12" rx="5" fill="#8b1c1f"/><rect x="415" y="300" width="18" height="12" rx="5" fill="#1b8427"/><rect x="415" y="351" width="18" height="12" rx="5" fill="#8a7517"/><circle cx="423" cy="444" r="7" fill="#222"/><use href="#res" x="384" y="220" width="9" height="27"/><use href="#res" x="384" y="272" width="9" height="27"/><use href="#res" x="384" y="321" width="9" height="27"/><path d="M362 385h20M360 452h22" stroke="#bfa25c" stroke-width="7"/><path d="M541 323v14M547 323v14M553 323v14" stroke="#c77a38" stroke-width="3"/><rect x="535" y="338" width="25" height="26" fill="#1c1c1c"/></svg>
<h2>Mecanismo de Bloqueo Secreto</h2><div class="meta"><p>Hace 24 días<br>Vínculo compartido</p><span><svg class="rc"><use href="#recycle"/></svg>0</span><span><svg class="ht"><use href="#heart"/></svg>0</span></div></article>

<article class="card"><svg class="thumb" viewBox="823 21 704 480" preserveAspectRatio="none">
<use href="#board" x="908" y="279" width="542" height="191"/><use href="#uno" x="896" y="76" width="392" height="184"/>
<g class="w"><path class="r" d="M952 298v158M1000 300v-16q0-5 6-6l170-26"/><path class="k" d="M960 290v158M1016 294v-8q0-4 6-5l160-27M1190 290v104"/><path class="y" d="M1190 88l-18 18v240M1183 88v258M1178 88l20 18v240"/><path class="g" d="M1228 250l60 94M1236 250l67 94M1245 250l74 94M1287 370v88M1303 370v88M1319 370v88"/></g>
<path d="M1174 384h11M1195 384h8" stroke="#f04a2a" stroke-width="6"/><use href="#res" x="1173" y="362" width="12" height="22"/><use href="#res" x="1195" y="362" width="8" height="22"/><use href="#res" x="1284" y="297" width="8" height="24"/><use href="#res" x="1299" y="297" width="8" height="24"/><use href="#res" x="1315" y="297" width="8" height="24"/><circle cx="1273" cy="366" r="9" fill="#cc9860"/><circle cx="1317" cy="366" r="9" fill="#cc9860"/><circle cx="1332" cy="366" r="9" fill="#cc9860"/><path d="M1176 418l8 14h8l8-14M1188 418v14" stroke="#aaa" fill="none" stroke-width="3"/></svg>
<h2>Lámpara de Mezcla de Colores</h2><div class="meta"><p>Hace 24 días<br>Vínculo compartido</p><span><svg class="rc"><use href="#recycle"/></svg>0</span><span><svg class="ht"><use href="#heart"/></svg>0</span></div></article>

<article class="card"><svg class="thumb" viewBox="22 21 704 480" preserveAspectRatio="none">
<use href="#board" x="78" y="213" width="602" height="210"/><use href="#psu" x="534" y="100" width="96" height="86"/>
<g class="w"><path class="r" d="M578 178v59M613 235v175M418 235v30M534 235q9 0 9 8v90"/><path class="k" d="M587 178v50M605 226v175M392 370v30M418 370v30M480 340v60"/><path class="g" d="M427 284h73q8 0 8 8v40M436 295h23q7 0 7 7v48M427 352h42l-30-8"/></g>
<rect x="412" y="308" width="38" height="20" fill="#222"/><path d="M425 317h12" stroke="#aaa" stroke-width="4"/><rect x="389" y="324" width="13" height="22" rx="5" fill="#1b8427"/><ellipse cx="476" cy="326" rx="9" ry="11" fill="#1c5ca6"/><path d="M406 362h24M476 362h22M514 351h22" stroke="#dba758" stroke-width="7"/><path d="M413 362h14M482 362h14M518 351h14" stroke="#b3321e" stroke-width="7" stroke-dasharray="3 4"/></svg>
<h2>Multivibrador Astable con 555 (...</h2><div class="meta"><p>Hace un mes<br>Vínculo compartido</p><span><svg class="rc"><use href="#recycle"/></svg>0</span><span><svg class="ht"><use href="#heart"/></svg>0</span></div></article>

<article class="card"><svg class="thumb" viewBox="819 21 704 480" preserveAspectRatio="none">
<use href="#board" x="864" y="198" width="425" height="150"/>
<g class="w"><path class="r" d="M1105 256v82M1252 216v122M1259 215h80M1087 212v25M1211 214v20"/><path class="k" d="M1122 262v70M1081 262v14q0 7 7 7h17q6 0 6-7v-13"/><path class="gr" d="M1259 208h80M1144 210v24M1197 210v16"/></g>
<use href="#pot" x="1095" y="212" width="32" height="36"/><rect x="1077" y="236" width="10" height="17" rx="4" fill="#8b1c1f"/><circle cx="1201" cy="232" r="8" fill="#cc9860"/><rect x="1202" y="236" width="9" height="16" rx="3" fill="#8a7517"/><path d="M1121 243h18" stroke="#e78244" stroke-width="6"/>
<rect x="1345" y="184" width="12" height="21" fill="#b8b8b8"/><rect x="1345" y="218" width="12" height="22" fill="#a6a6a6"/><rect x="1340" y="180" width="6" height="62" fill="#222"/><rect x="1355" y="178" width="36" height="70" fill="#d08d50"/><rect x="1390" y="178" width="86" height="70" fill="#303030"/><circle cx="1362" cy="196" r="3" fill="#543"/><circle cx="1362" cy="227" r="3" fill="#543"/><text class="volt" transform="translate(1421 202) rotate(90)">9V</text></svg>
<h2>LED con Control de Brillo por Po...</h2><div class="meta"><p>Hace un mes<br>Vínculo compartido</p><span><svg class="rc"><use href="#recycle"/></svg>0</span><span><svg class="ht"><use href="#heart"/></svg>0</span></div></article>

<article class="card"><svg class="thumb" viewBox="780 -105 714 480" preserveAspectRatio="none">
<use href="#board" x="834" y="90" width="615" height="209"/><use href="#psu" x="1324" y="-31" width="98" height="87"/>
<g class="w"><path class="r" d="M1369 48v64M1395 112v175"/><path class="k" d="M1378 48v55M1387 103v173"/><path class="g" d="M1297 103v60q0 7 8 7M983 165l20-12h34v10M985 178l15-14M988 160l28-8M1064 165l8-12h36v10M1070 158l20-5v10M1126 153h16v10M1190 165l14-18h42v16M1195 178l15-25h20M1200 158l26-12v16M1000 235q2 14 20 14l20-14v10M1030 240l14-12M1072 235q2 20 14 12l20-12q-4 14 12 12M1080 250l20-16M1134 235q4 20 16 16l22-18M1140 250l18-16M1208 235v12h14l18-16M1240 246l20-22"/></g>
<use href="#seg" x="996" y="163" width="45" height="71"/><use href="#seg" x="1068" y="163" width="45" height="71"/><use href="#seg" x="1131" y="163" width="45" height="71"/><use href="#seg" x="1203" y="163" width="45" height="71"/>
<use href="#res" x="978" y="109" width="10" height="25"/><use href="#res" x="1014" y="118" width="10" height="25"/><use href="#res" x="1059" y="109" width="10" height="25"/><use href="#res" x="1086" y="118" width="10" height="25"/><use href="#res" x="1122" y="109" width="10" height="25"/><use href="#res" x="1149" y="118" width="10" height="25"/><use href="#res" x="1184" y="109" width="10" height="25"/><use href="#res" x="1220" y="118" width="10" height="25"/><use href="#res" x="1041" y="244" width="10" height="25"/><use href="#res" x="1113" y="244" width="10" height="25"/><use href="#res" x="1175" y="244" width="10" height="25"/><use href="#res" x="1256" y="244" width="10" height="25"/><use href="#res" x="1311" y="117" width="9" height="24"/><rect x="1302" y="133" width="14" height="22" rx="5" fill="#8b1c1f"/></svg>
<h2>Letras en Display 7 seg</h2><div class="meta"><p>Hace un mes<br>Vínculo compartido</p><span><svg class="rc"><use href="#recycle"/></svg>0</span><span><svg class="ht"><use href="#heart"/></svg>0</span></div></article>

<article class="card"><svg class="thumb fine" viewBox="441.700 605 198.700 133.600" preserveAspectRatio="none">
<use href="#board" x="471.500" y="673" width="155.500" height="54.500"/><use href="#uno" x="454.500" y="616" width="101" height="53.500"/>
<g class="w"><path class="y" d="M536 619l-1 64M538 619l9 64M541 619l-3 20-4 44M541 619l23 64"/><path class="g" d="M527 660l-20 23"/><path class="k" d="M517 668v12"/></g>
<rect x="532" y="686" width="3.400" height="6" rx="1.400" fill="#b31c1f"/><rect x="545.500" y="686" width="3.400" height="6" rx="1.400" fill="#b31c1f"/><rect x="559" y="686" width="3.400" height="6" rx="1.400" fill="#1b8427"/><use href="#res" x="504" y="678" width="2.800" height="7"/><use href="#res" x="532.500" y="678" width="2.800" height="7"/><use href="#res" x="546" y="678" width="2.800" height="7"/><use href="#res" x="559.500" y="678" width="2.800" height="7"/><rect x="504.500" y="698" width="5" height="5" fill="#999"/><circle cx="507" cy="700.500" r="2" fill="#222"/></svg>
<h2>Interface de Nave Espacial</h2><div class="meta"><p>Hace un mes<br>Vínculo compartido</p><span><svg class="rc"><use href="#recycle"/></svg>0</span><span><svg class="ht"><use href="#heart"/></svg>0</span></div></article>
</section>
</main>
</div>
</body>
</html>
```
FILE: styles.css
```css
*{box-sizing:border-box}
body{margin:0;height:943px;overflow:hidden;display:flex;flex-direction:column;font-family:Roboto,"Noto Sans",sans-serif;color:#222;background:#f0f0f0}
button{font:inherit;border:0;padding:0}
h1,h2,p{margin:0}
.defs{position:absolute}
.topbar{flex:none;height:74px;background:#1477d4;display:grid;grid-template-columns:752px 1fr auto;color:#fff}
.brand{display:flex;padding:9px 0 0 12px;gap:11px}
.tiles{display:grid;grid-template-columns:repeat(3,15px);grid-auto-rows:15px;gap:2px}
.tiles b{background:#fff;color:#1477d4;font:900 14px/15px Lato,sans-serif;text-align:center}
.brand-text{display:flex;flex-direction:column}
.brand-top{font:900 20px/26px Lato,sans-serif;letter-spacing:1.700px}
.brand-sub{font:500 21px/21px Roboto,sans-serif;letter-spacing:-.1px}
.nav{display:flex;padding-top:19px;font-weight:700;font-size:16px;letter-spacing:.15px}
.nav-link{height:31px;line-height:31px;flex:none;white-space:nowrap}
.nav-link.active{width:84px;padding-left:11px;border-radius:16px;background:#115b9f}
.n2{margin-left:20.500px;width:86.500px}.n3{width:107px}.n4{width:74px}
.chev{width:9px;height:6px;margin-left:4px;vertical-align:2px;fill:none;stroke:#fff;stroke-width:1.500}
.account{display:flex;padding:14px 25px 0 0;gap:15px}
.lens-top{width:19px;height:19px;margin-top:11px}
.face-top{width:40px;height:40px;color:#edf3fc}
.shell{flex:1;display:flex;min-height:0}
.side{width:220px;flex:none;background:#fff;border-right:2px solid #d0d5dd;position:relative;display:flex;flex-direction:column}
.profile{height:223px;border-bottom:1px solid #d8d8d8;display:flex;flex-direction:column;align-items:center;padding:12px 22px 0 0}
.face{width:75px;height:75px;color:#e1e8f3}
.user{font-size:17px;font-weight:400;line-height:22px;margin-top:13px;letter-spacing:.1px}
.badges{display:flex;gap:12px;margin-top:13px;margin-left:2px}
.badges svg{width:40px;height:46px}
.hex{fill:#e6e6e6;stroke:#9ea6b2;stroke-width:1.500}
.see{font-size:13px;font-weight:400;line-height:18px;margin-top:16px;margin-left:2px;letter-spacing:.2px}
.menu{padding-top:7px;display:flex;flex-direction:column;gap:4px}
.menu a,.help{height:44px;display:flex;align-items:center;gap:12px;padding-left:8px;font-size:16px;font-weight:500;color:#1e1e1e;letter-spacing:.4px}
.menu a{border:2px solid transparent;border-left:0;width:210px}
.menu svg,.help svg{width:24px;height:24px;fill:none;stroke:#667085;stroke-width:2;stroke-linejoin:round}
.menu a.on{color:#0b3fa8;border:2px solid #0b75dc;border-radius:22px;margin:1px 0 -1px -12px;width:222px;padding:0 0 2px 18px}
.menu a.on svg{stroke:#0b75dc;stroke-linejoin:miter}
.help{margin-top:auto;height:53px;border-top:1px solid #d8d8d8;padding-top:6px}
.handle{position:absolute;left:208px;top:715px;width:20px;height:48px;border:2px solid #d0d5dd;border-radius:10px;background:#fff;display:grid;place-items:center}
.handle svg{width:8px;height:18px;fill:none;stroke:#98a2b3;stroke-width:1.800}
.main{flex:1;min-width:0;padding:24px 29px 0 37px}
.row{display:flex;align-items:center}
.head{height:38px}
h1{font-size:27px;font-weight:300;letter-spacing:1.400px;flex:1;color:#222;text-indent:-1px}
.search{width:300px;height:38px;border:2px solid #ccd3da;border-radius:19px;display:flex;align-items:center;justify-content:space-between;padding:0 13px 0 18px;color:#a4adb9;font-weight:500;font-size:15px;letter-spacing:.3px}
.search svg{width:20px;height:20px}
.create{margin-left:16px;width:98px;height:36px;border-radius:18px;background:#0876de;color:#fff;font-weight:700;font-size:14px;letter-spacing:.4px;display:flex;align-items:center;gap:9px;padding-left:14px;line-height:20px}
.create svg{width:20px;height:20px;stroke:#fff;stroke-width:2;margin-top:-3px}
.tools{height:38px;margin-top:22px;padding-left:19px;font-size:15px;font-weight:500;color:#667085;letter-spacing:.38px;white-space:nowrap}
.tab{display:flex;align-items:center;gap:10px}
.tab svg{width:20px;height:22px;fill:none;stroke:currentColor;stroke-width:1.700;stroke-linejoin:round}
.t3d{width:75px}
.sel{width:131px;height:38px;border:2px solid #088a3c;border-radius:19px;color:#088a3c;padding-left:18px}
.tab.sel svg{stroke-width:2}
.blocks{margin-left:28px}
.tool{display:flex;align-items:center}
.bin{margin-left:auto;width:204px;gap:9px}
.bin svg{width:16px;height:19px;fill:none;stroke:currentColor;stroke-width:1.700}
.pick{width:133px;gap:6px}
.pick i{width:16px;height:16px;border:1px solid #767676;border-radius:2px;background:#fff}
.sort{width:100px;gap:8px}
.sort svg{width:12px;height:8px;fill:none;stroke:#a4adb9;stroke-width:2}
.grid{margin:23px 4px 0 3px;width:1585px;display:grid;grid-template-columns:repeat(6,238px);column-gap:31.400px;row-gap:32px;grid-auto-rows:221px}
.card{background:#fff;border-radius:3px;box-shadow:0 2px 8px rgba(0,0,0,.05);position:relative}
.thumb{display:block;width:238px;height:160px;overflow:hidden}
.card h2{font-size:15px;font-weight:400;line-height:20px;color:#555;padding:4px 0 0 7.500px;white-space:nowrap;margin:0;letter-spacing:-.23px}
.meta{display:flex;padding:4px 9.500px 0 7.500px;font-size:13px;line-height:15px;color:#a0a0a0}
.meta p{flex:1;letter-spacing:.12px}
.meta span{display:flex;align-items:center;gap:5px;font-size:13px;margin-left:12px;height:15px;margin-top:11px}
.rc{width:16px;height:16px;color:#5c6a80}
.ht{width:14px;height:13px;color:#5c6a80}
.edit{position:absolute;left:7px;top:13px;width:59px;height:26px;background:#e3ebf8;border:1px solid #d6e2f2;border-radius:4px;color:#fff;font-size:12px;line-height:24px;text-align:center}
.gear{position:absolute;left:202px;top:14px;width:20px;height:20px;fill:none;stroke:#8d99ab;stroke-width:1.400}
.w{fill:none;stroke-width:2.700;stroke-opacity:.85}
.fine .w{stroke-width:.8}
.r{stroke:#e2393b}.k{stroke:#444}.g{stroke:#3cae45}.y{stroke:#ecd21c}.o{stroke:#e88420}.p{stroke:#8346a8}.m{stroke:#dc3b98}.c{stroke:#6fc3d2}.b{stroke:#a97c55}.bl{stroke:#2f9ade}.gr{stroke:#a2a2a2}
.keys{font:700 19px "Liberation Sans",sans-serif;fill:#f6fbff;text-anchor:middle}
.volt{font:700 17px "Liberation Sans",sans-serif;fill:#ddd}
.model{font:400 15px "Liberation Sans",sans-serif;fill:#cfe0ec}
```
